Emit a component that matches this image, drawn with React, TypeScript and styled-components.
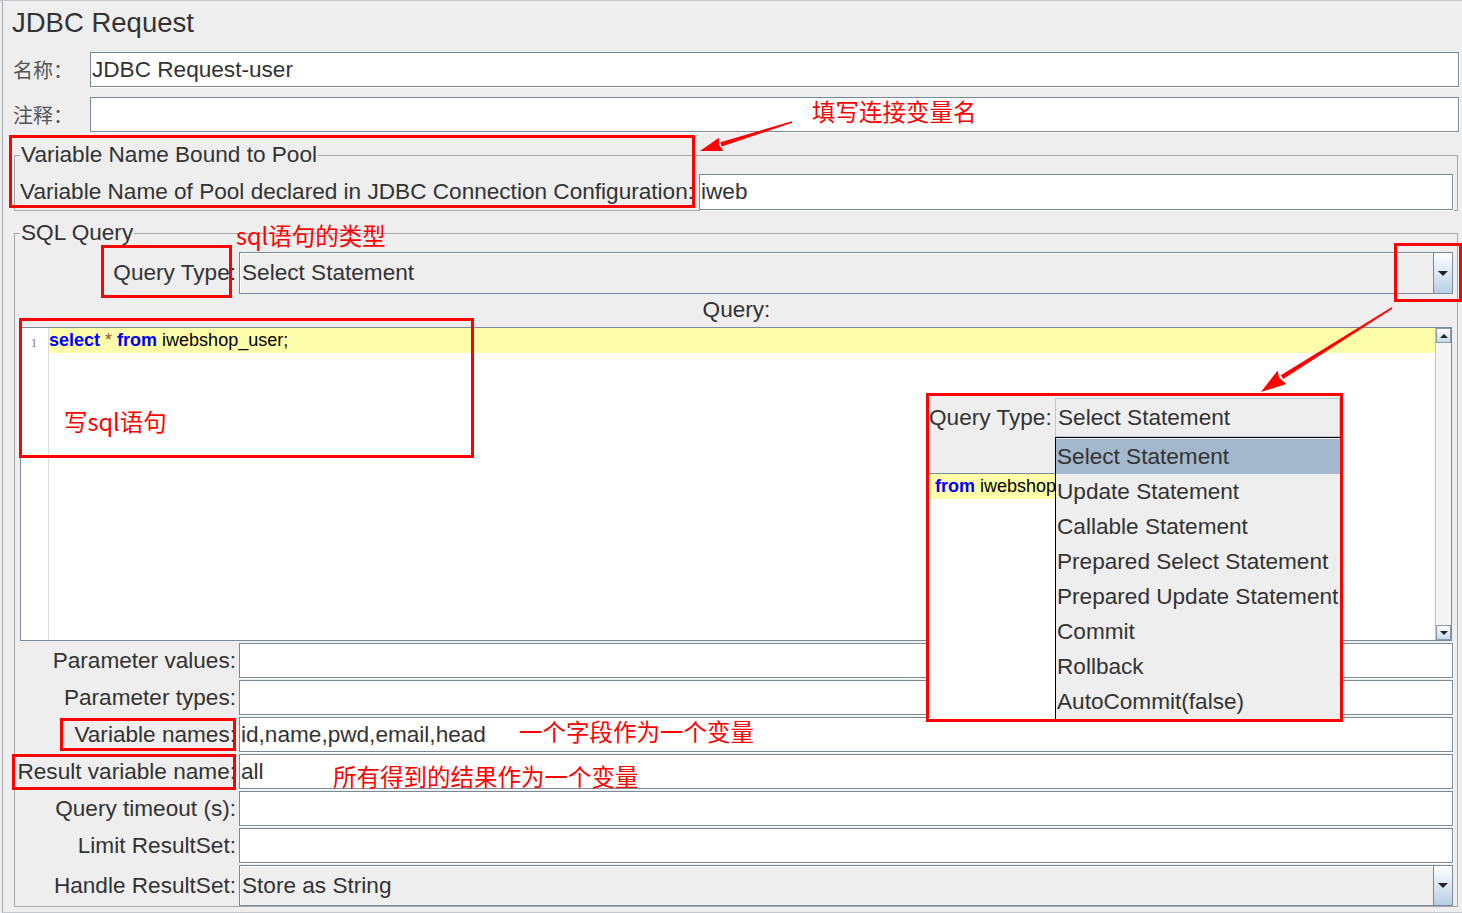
import React from "react";
import styled, { createGlobalStyle } from "styled-components";

const Global = createGlobalStyle`
  html, body { margin: 0; padding: 0; background: #eeeeee; }
  body { font-family: "Liberation Sans", Arial, sans-serif; color: #333333; }
  * { box-sizing: border-box; }
`;

const UI_FONT = "22.6px";

const Page = styled.div`
  position: relative;
  width: 1462px;
  height: 913px;
  overflow: hidden;
  background: #eeeeee;
  border-top: 1px solid #c5c9ce;
  padding-left: 2px;
`;

const Panel = styled.div`
  height: 100%;
  border-left: 1px solid #a9adb2;
  border-bottom: 1px solid #c5c9ce;
  display: flex;
  flex-direction: column;
`;

const Title = styled.div`
  font-size: 27.5px;
  line-height: 44px;
  height: 44px;
  padding-left: 9px;
  margin-bottom: 7px;
  color: #333;
`;

const TopRow = styled.div<{ $gap: number }>`
  display: grid;
  grid-template-columns: 87px 1fr;
  margin-right: 3px;
  margin-bottom: ${(p) => p.$gap}px;
`;

const CjkLabel = styled.div`
  font-family: "Noto Sans CJK SC", "Liberation Sans", sans-serif;
  font-size: 20px;
  color: #555;
  padding-left: 10px;
  display: flex;
  align-items: center;
`;

const TextField = styled.div<{ $h?: number }>`
  height: ${(p) => p.$h ?? 35}px;
  background: #ffffff;
  border: 1px solid #7a8a99;
  box-shadow: 1px 1px 0 #ffffff;
  font-size: ${UI_FONT};
  line-height: ${(p) => (p.$h ?? 35) - 2}px;
  padding-left: 1px;
  white-space: nowrap;
  overflow: hidden;
  color: #333;
`;

const Group = styled.fieldset<{ $top: number }>`
  margin: ${(p) => p.$top}px 4px 0 11px;
  padding: 7px 4px 0 5px;
  border: 1px solid #a8a8a8;
  min-width: 0;
`;

const Legend = styled.legend`
  padding: 0 1px;
  font-size: ${UI_FONT};
  line-height: 24px;
  color: #333;
`;

const PoolRow = styled.div`
  display: flex;
  align-items: center;
  gap: 2px;
`;

const PoolLabel = styled.div`
  width: 677px;
  flex: none;
  font-size: ${UI_FONT};
  white-space: nowrap;
  overflow: hidden;
`;

const Grow = styled.div`
  flex: 1;
  min-width: 0;
`;

const FormGrid = styled.div`
  display: grid;
  grid-template-columns: 217px 1fr;
  column-gap: 2px;
  row-gap: 2px;
`;

const RowLabel = styled.div`
  font-size: ${UI_FONT};
  text-align: right;
  padding-right: 1px;
  white-space: nowrap;
  display: flex;
  align-items: center;
  justify-content: flex-end;
`;

const Combo = styled.div<{ $h: number }>`
  height: ${(p) => p.$h}px;
  display: flex;
  border: 1px solid #7a8a99;
  box-shadow: inset 1px 1px 0 #ffffff;
  background: #eeeeee;
`;

const ComboText = styled.div`
  flex: 1;
  font-size: ${UI_FONT};
  display: flex;
  align-items: center;
  padding-left: 2px;
`;

const ArrowButton = styled.div`
  width: 19px;
  border-left: 1px solid #7a8a99;
  background: linear-gradient(#ffffff, #b8cfe5);
  display: flex;
  align-items: center;
  justify-content: center;
`;

const Tri = styled.div<{ $up?: boolean }>`
  width: 0;
  height: 0;
  border-left: 5px solid transparent;
  border-right: 5px solid transparent;
  ${(p) => (p.$up ? "border-bottom: 5px solid #222;" : "border-top: 5px solid #222;")}
`;

const QueryCaption = styled.div`
  height: 33px;
  font-size: ${UI_FONT};
  display: flex;
  align-items: center;
  justify-content: center;
  padding-bottom: 1px;
`;

const Editor = styled.div`
  height: 314px;
  margin-right: 1px;
  border: 1px solid #7a8a99;
  background: #ffffff;
  display: flex;
  margin-bottom: 2px;
`;

const Gutter = styled.div`
  width: 28px;
  border-right: 1px solid #dddddd;
  font-family: "Liberation Serif", serif;
  font-size: 12px;
  color: #777;
  padding: 8px 0 0 10px;
`;

const Code = styled.div`
  flex: 1;
  font-size: 18px;
`;

const CodeLine = styled.div<{ $shift?: number }>`
  height: 25px;
  line-height: 25px;
  background: #ffffaa;
  white-space: nowrap;
  overflow: hidden;
  padding-left: ${(p) => p.$shift ?? 0}px;
  color: #000;
  font-size: 18px;
`;

const Kw = styled.span`
  color: #0000ff;
  font-weight: bold;
`;

const Op = styled.span`
  color: #a0522d;
`;

const ScrollBar = styled.div`
  width: 16px;
  border-left: 1px solid #b8c4d0;
  background: #f4f4f4;
  display: flex;
  flex-direction: column;
  justify-content: space-between;
`;

const ScrollBtn = styled.div`
  height: 15px;
  border: 1px solid #8a9aa9;
  background: linear-gradient(#ffffff, #c8d8e8);
  display: flex;
  align-items: center;
  justify-content: center;
`;

const SmallTri = styled.div<{ $up?: boolean }>`
  width: 0;
  height: 0;
  border-left: 4px solid transparent;
  border-right: 4px solid transparent;
  ${(p) => (p.$up ? "border-bottom: 4px solid #222;" : "border-top: 4px solid #222;")}
`;

/* overlays */
const RedBox = styled.div<{ $x: number; $y: number; $w: number; $h: number }>`
  position: absolute;
  left: ${(p) => p.$x}px;
  top: ${(p) => p.$y}px;
  width: ${(p) => p.$w}px;
  height: ${(p) => p.$h}px;
  border: 3px solid #ff0000;
  pointer-events: none;
`;

const Note = styled.div<{ $x: number; $y: number }>`
  position: absolute;
  left: ${(p) => p.$x}px;
  top: ${(p) => p.$y}px;
  color: #ff0000;
  font-family: "Noto Sans CJK SC", sans-serif;
  font-size: 23.5px;
  line-height: 24px;
  white-space: nowrap;
`;

const Arrows = styled.svg`
  position: absolute;
  left: 0;
  top: 0;
  pointer-events: none;
`;

const Inset = styled.div`
  position: absolute;
  left: 926px;
  top: 392px;
  width: 417px;
  height: 329px;
  border: 3px solid #ff0000;
  background: #eeeeee;
  display: flex;
  overflow: hidden;
`;

const InsetLeft = styled.div`
  width: 126px;
  display: flex;
  flex-direction: column;
  overflow: hidden;
`;

const InsetLabelArea = styled.div`
  height: 77px;
  font-size: ${UI_FONT};
  padding-top: 9px;
  white-space: nowrap;
`;

const InsetEditor = styled.div`
  flex: 1;
  background: #ffffff;
  border-top: 1px solid #7a8a99;
  overflow: hidden;
`;

const InsetRight = styled.div`
  flex: 1;
  display: flex;
  flex-direction: column;
`;

const MiniCombo = styled.div`
  margin-top: 2px;
  height: 41px;
  border: 1px solid #b8c8d8;
  background: #eeeeee;
  font-size: ${UI_FONT};
  display: flex;
  align-items: center;
  padding-left: 2px;
`;

const List = styled.div`
  flex: 1;
  border-top: 1px solid #000;
  border-left: 1px solid #000;
  padding-top: 1px;
  background: #eeeeee;
`;

const ListItem = styled.div<{ $selected?: boolean }>`
  height: 35px;
  font-size: ${UI_FONT};
  display: flex;
  align-items: center;
  padding-left: 1px;
  white-space: nowrap;
  background: ${(p) => (p.$selected ? "#a3b8cc" : "transparent")};
`;

const params: { label: string; value: string }[] = [
  { label: "Parameter values:", value: "" },
  { label: "Parameter types:", value: "" },
  { label: "Variable names:", value: "id,name,pwd,email,head" },
  { label: "Result variable name:", value: "all" },
  { label: "Query timeout (s):", value: "" },
  { label: "Limit ResultSet:", value: "" },
];

const options = [
  "Select Statement",
  "Update Statement",
  "Callable Statement",
  "Prepared Select Statement",
  "Prepared Update Statement",
  "Commit",
  "Rollback",
  "AutoCommit(false)",
];

export default function App() {
  return (
    <Page>
      <Global />
      <Panel>
        <Title>JDBC Request</Title>
        <TopRow $gap={10}>
          <CjkLabel>名称：</CjkLabel>
          <TextField>JDBC Request-user</TextField>
        </TopRow>
        <TopRow $gap={0}>
          <CjkLabel>注释：</CjkLabel>
          <TextField />
        </TopRow>

        <Group $top={11}>
          <Legend>Variable Name Bound to Pool</Legend>
          <PoolRow>
            <PoolLabel>Variable Name of Pool declared in JDBC Connection Configuration:</PoolLabel>
            <Grow>
              <TextField $h={36}>iweb</TextField>
            </Grow>
          </PoolRow>
        </Group>

        <Group $top={10}>
          <Legend>SQL Query</Legend>
          <FormGrid>
            <RowLabel>Query Type:</RowLabel>
            <Combo $h={42}>
              <ComboText>Select Statement</ComboText>
              <ArrowButton>
                <Tri />
              </ArrowButton>
            </Combo>
          </FormGrid>
          <QueryCaption>Query:</QueryCaption>
          <Editor>
            <Gutter>1</Gutter>
            <Code>
              <CodeLine>
                <Kw>select</Kw> <Op>*</Op> <Kw>from</Kw> iwebshop_user;
              </CodeLine>
            </Code>
            <ScrollBar>
              <ScrollBtn>
                <SmallTri $up />
              </ScrollBtn>
              <ScrollBtn>
                <SmallTri />
              </ScrollBtn>
            </ScrollBar>
          </Editor>
          <FormGrid>
            {params.map((p) => (
              <React.Fragment key={p.label}>
                <RowLabel>{p.label}</RowLabel>
                <TextField>{p.value}</TextField>
              </React.Fragment>
            ))}
            <RowLabel>Handle ResultSet:</RowLabel>
            <Combo $h={41}>
              <ComboText>Store as String</ComboText>
              <ArrowButton>
                <Tri />
              </ArrowButton>
            </Combo>
          </FormGrid>
        </Group>
      </Panel>

      <Inset>
        <InsetLeft>
          <InsetLabelArea>Query Type:</InsetLabelArea>
          <InsetEditor>
            <CodeLine $shift={6}>
              <Kw>from</Kw> iwebshop
            </CodeLine>
          </InsetEditor>
        </InsetLeft>
        <InsetRight>
          <MiniCombo>Select Statement</MiniCombo>
          <List>
            {options.map((o, i) => (
              <ListItem key={o} $selected={i === 0}>
                {o}
              </ListItem>
            ))}
          </List>
        </InsetRight>
      </Inset>

      <RedBox $x={9} $y={134} $w={686} $h={73} />
      <RedBox $x={101} $y={244} $w={131} $h={53} />
      <RedBox $x={1394} $y={242} $w={68} $h={59} />
      <RedBox $x={19} $y={317} $w={455} $h={140} />
      <RedBox $x={60} $y={717} $w={176} $h={33} />
      <RedBox $x={12} $y={753} $w={224} $h={36} />

      <Note $x={812} $y={98}>填写连接变量名</Note>
      <Note $x={236} $y={222}>sql语句的类型</Note>
      <Note $x={64} $y={408}>写sql语句</Note>
      <Note $x={519} $y={718}>一个字段作为一个变量</Note>
      <Note $x={333} $y={763}>所有得到的结果作为一个变量</Note>

      <Arrows width="1462" height="913" viewBox="0 0 1462 913">
        <polygon
          fill="#ff0000"
          points="792.24,121.76 791.76,120.24 720.34,141.3 721.66,145.5"
        />
        <polygon
          fill="#ff0000"
          points="700,150 723.1,150.1 719,143.6 718.9,136.7"
        />
        <polygon
          fill="#ff0000"
          points="1392.4,307.7 1391.6,306.3 1280.8,374.3 1283.2,378.1"
        />
        <polygon
          fill="#ff0000"
          points="1261,391 1286.3,383 1279,376.5 1277.7,369.4"
        />
      </Arrows>
    </Page>
  );
}
